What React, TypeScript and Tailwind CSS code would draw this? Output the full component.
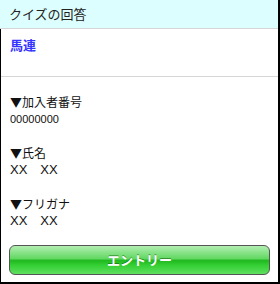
export default function App() {
  const fields = [
    { label: '▼加入者番号', value: '00000000', small: true },
    { label: '▼氏名', value: 'XX\u3000XX', small: false },
    { label: '▼フリガナ', value: 'XX\u3000XX', small: false },
  ];

  return (
    <div className="w-[280px] h-[284px] bg-white border-r-2 border-b-2 border-black font-['Liberation_Sans','Noto_Sans_CJK_JP',sans-serif] overflow-hidden">
      {/* Header */}
      <div className="h-[29px] bg-[#dcfefe] border-b border-[#d6d6d6] px-[9px] flex items-center text-[13px] text-[#222] font-['Noto_Sans_CJK_JP',sans-serif]">
        クイズの回答
      </div>

      <div className="h-[253px] border-l border-black">
        {/* Answer */}
        <div className="h-[48px] border-b border-[#d6d6d6] pt-[8px] px-[9px]">
          <p className="text-[13px] leading-[16px] text-[#3535ff] font-semibold font-['Noto_Sans_CJK_JP',serif]">馬連</p>
        </div>

        {/* Fields */}
        <div className="pt-[17px] px-[9px] flex flex-col gap-[18px]">
          {fields.map((f) => (
            <div key={f.label} className="flex flex-col">
              <p className="text-[12px] leading-[16px] text-[#111] font-['Noto_Sans_CJK_JP',sans-serif]">{f.label}</p>
              <p
                className={
                  f.small
                    ? 'text-[11px] leading-[16px] text-[#111] mt-[1px]'
                    : 'text-[13px] leading-[16px] text-[#111] mt-[1px]'
                }
              >
                {f.value}
              </p>
            </div>
          ))}
        </div>

        {/* Entry button */}
        <div className="px-[8px] mt-[16px]">
          <button className="w-full h-[30px] rounded-[6px] border border-[#555] bg-[linear-gradient(to_bottom,#b2eeb2_0%,#62d862_45%,#20b820_52%,#33cf33_68%,#5fe05f_100%)] text-white text-[13px] font-bold font-['Noto_Sans_CJK_JP',sans-serif] [text-shadow:0_-1px_0_rgba(0,80,0,0.5)]">
            エントリー
          </button>
        </div>
      </div>
    </div>
  );
}
